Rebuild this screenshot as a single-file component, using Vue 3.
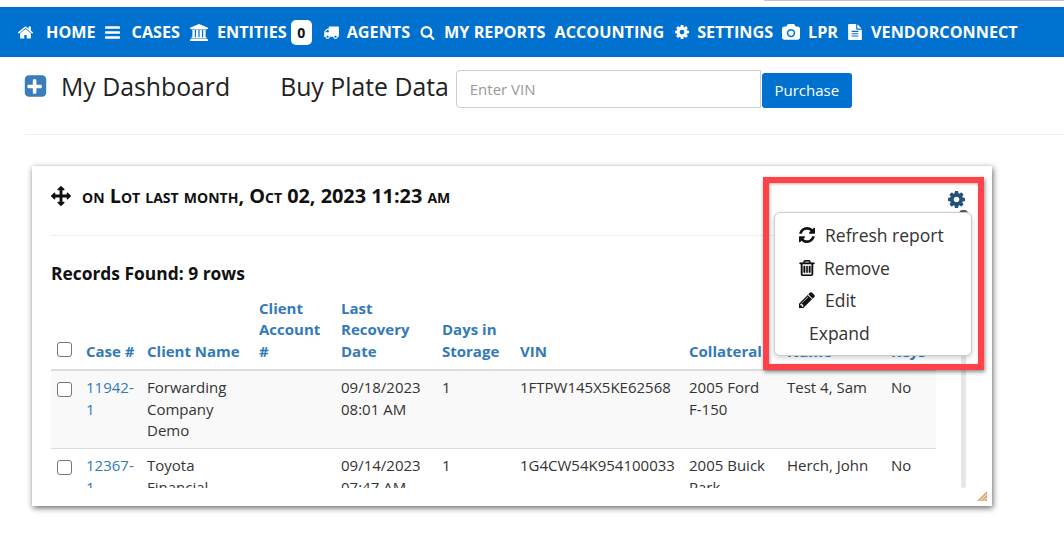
<script setup>
const P = {
  home: ['96 96 1600 1600', 'M1472 992v480q0 26-19 45t-45 19h-384v-384h-256v384h-384q-26 0-45-19t-19-45v-480q0-1 .5-3t.5-3l575-474 575 474q1 2 1 6zm223-69l-62 74q-8 9-21 11h-3q-13 0-21-7l-692-577-692 577q-12 8-24 7-13-2-21-11l-62-74q-8-10-7-23.500t11-21.500l719-599q32-26 76-26t76 26l244 204v-195q0-14 9-23t23-9h192q14 0 23 9t9 23v408l219 182q10 8 11 21.500t-7 23.500z'],
  bars: ['128 128 1536 1536', 'M1664 1344v128q0 26-19 45t-45 19h-1408q-26 0-45-19t-19-45v-128q0-26 19-45t45-19h1408q26 0 45 19t19 45zm0-512v128q0 26-19 45t-45 19h-1408q-26 0-45-19t-19-45v-128q0-26 19-45t45-19h1408q26 0 45 19t19 45zm0-512v128q0 26-19 45t-45 19h-1408q-26 0-45-19t-19-45v-128q0-26 19-45t45-19h1408q26 0 45 19t19 45z'],
  bank: ['0 0 1920 1792', 'M960 0l960 384v128h-128q0 26-20.500 45t-48.500 19h-1526q-28 0-48.500-19t-20.500-45h-128v-128zm-704 640h256v768h128v-768h256v768h128v-768h256v768h128v-768h256v768h59q28 0 48.500 19t20.500 45v64h-1664v-64q0-26 20.500-45t48.500-19h59v-768zm1595 960q28 0 48.500 19t20.500 45v128h-1920v-128q0-26 20.500-45t48.500-19h1782z'],
  truck: ['0 192 1792 1472', 'M640 1408q0-52-38-90t-90-38-90 38-38 90 38 90 90 38 90-38 38-90zm-384-512h384v-256h-158q-13 0-22 9l-195 195q-9 9-9 22v30zm1280 512q0-52-38-90t-90-38-90 38-38 90 38 90 90 38 90-38 38-90zm256-1088v1024q0 15-4 26.500t-13.500 18.500-16.500 11.500-23.500 6-22.500 2-25.500 0-22.500-.5q0 106-75 181t-181 75-181-75-75-181h-384q0 106-75 181t-181 75-181-75-75-181h-64q-3 0-22.500.5t-25.500 0-22.500-2-23.500-6-16.500-11.500-13.500-18.500-4-26.500q0-26 19-45t45-19v-320q0-8-.5-35t0-38 2.500-34.500 6.500-37 14-30.500 22.500-30l198-198q19-19 50.500-32t58.500-13h160v-192q0-26 19-45t45-19h1024q26 0 45 19t19 45z'],
  search: ['0 0 1792 1792', 'M1216 832q0-185-131.500-316.500t-316.500-131.500-316.500 131.500-131.500 316.500 131.500 316.500 316.500 131.500 316.500-131.500 131.500-316.500zm512 832q0 52-38 90t-90 38q-54 0-90-38l-343-342q-179 124-399 124-143 0-273.500-55.500t-225-150-150-225-55.500-273.500 55.500-273.500 150-225 225-150 273.500-55.500 273.500 55.500 225 150 150 225 55.500 273.500q0 220-124 399l343 343q37 37 37 90z'],
  cog: ['128 128 1536 1536', 'M1152 896q0-106-75-181t-181-75-181 75-75 181 75 181 181 75 181-75 75-181zm512-109v222q0 12-8 23t-19 13l-185 28q-19 54-39 91 35 50 107 138 10 12 10 25t-9 23q-27 37-99 108t-94 71q-12 0-26-9l-138-108q-44 23-91 38-16 136-29 186-7 28-36 28h-222q-14 0-24.500-8.500t-11.500-21.500l-28-184q-49-16-90-37l-141 107q-10 9-25 9-14 0-25-11-126-114-165-168-7-10-7-23 0-12 8-23 15-21 51-66.500t54-70.500q-27-50-41-99l-183-27q-13-2-21-12.500t-8-23.500v-222q0-12 8-23t19-13l186-28q14-46 39-92-40-57-107-138-10-12-10-24 0-10 9-23 26-36 98.500-107.500t94.500-71.500q13 0 26 10l138 107q44-23 91-38 16-136 29-186 7-28 36-28h222q14 0 24.500 8.500t11.500 21.500l28 184q49 16 90 37l142-107q9-9 24-9 13 0 25 10 129 119 165 170 7 8 7 22 0 12-8 23-15 21-51 66.500t-54 70.500q26 50 41 98l183 28q13 2 21 12.500t8 23.500z'],
  camera: ['0 0 1920 1792', 'M960 672q119 0 203.500 84.500t84.500 203.500-84.500 203.500-203.500 84.500-203.500-84.500-84.500-203.500 84.500-203.500 203.500-84.500zm704-416q106 0 181 75t75 181v896q0 106-75 181t-181 75h-1408q-106 0-181-75t-75-181v-896q0-106 75-181t181-75h224l51-136q19-49 69.500-84.500t103.500-35.500h512q53 0 103.500 35.500t69.500 84.500l51 136h224zm-704 1152q185 0 316.500-131.500t131.500-316.500-131.500-316.500-316.500-131.500-316.500 131.500-131.500 316.500 131.500 316.500 316.500 131.500z'],
  file: ['128 0 1536 1792', 'M1596 476q14 14 28 36h-472v-472q22 14 36 28zm-476 164h544v1056q0 40-28 68t-68 28h-1344q-40 0-68-28t-28-68v-1600q0-40 28-68t68-28h800v544q0 40 28 68t68 28zm160 736v-64q0-14-9-23t-23-9h-704q-14 0-23 9t-9 23v64q0 14 9 23t23 9h704q14 0 23-9t9-23zm0-256v-64q0-14-9-23t-23-9h-704q-14 0-23 9t-9 23v64q0 14 9 23t23 9h704q14 0 23-9t9-23zm0-256v-64q0-14-9-23t-23-9h-704q-14 0-23 9t-9 23v64q0 14 9 23t23 9h704q14 0 23-9t9-23z'],
  refresh: ['128 128 1536 1536', 'M1639 1056q0 5-1 7-64 268-268 434.500t-478 166.500q-146 0-282.500-55t-243.500-157l-129 129q-19 19-45 19t-45-19-19-45v-448q0-26 19-45t45-19h448q26 0 45 19t19 45-19 45l-137 137q71 66 161 102t187 36q134 0 250-65t186-179q11-17 53-117 8-23 30-23h192q13 0 22.500 9.500t9.500 22.500zm25-800v448q0 26-19 45t-45 19h-448q-26 0-45-19t-19-45 19-45l138-138q-148-137-349-137-134 0-250 65t-186 179q-11 17-53 117-8 23-30 23h-199q-13 0-22.500-9.500t-9.500-22.500v-7q65-268 270-434.500t480-166.500q146 0 284 55.500t245 156.500l130-129q19-19 45-19t45 19 19 45z'],
  trash: ['128 128 1536 1536', 'M704 736v576q0 14-9 23t-23 9h-64q-14 0-23-9t-9-23v-576q0-14 9-23t23-9h64q14 0 23 9t9 23zm256 0v576q0 14-9 23t-23 9h-64q-14 0-23-9t-9-23v-576q0-14 9-23t23-9h64q14 0 23 9t9 23zm256 0v576q0 14-9 23t-23 9h-64q-14 0-23-9t-9-23v-576q0-14 9-23t23-9h64q14 0 23 9t9 23zm128 724v-948h-896v948q0 22 7 40.500t14.500 27 10.500 8.500h832q3 0 10.500-8.500t14.500-27 7-40.500zm-672-1076h448l-48-117q-7-9-17-11h-317q-10 2-17 11zm928 32v64q0 14-9 23t-23 9h-96v948q0 83-47 143.500t-113 60.500h-832q-66 0-113-58.500t-47-141.500v-952h-96q-14 0-23-9t-9-23v-64q0-14 9-23t23-9h309l70-167q15-37 54-63t79-26h320q40 0 79 26t54 63l70 167h309q14 0 23 9t9 23z'],
  pencil: ['128 128 1536 1536', 'M491 1536l91-91-235-235-91 91v107h128v128h107zm523-928q0-22-22-22-10 0-17 7l-542 542q-7 7-7 17 0 22 22 22 10 0 17-7l542-542q7-7 7-17zm-54-192l416 416-832 832h-416v-416zm683 96q0 53-37 90l-166 166-416-416 166-165q36-38 90-38 53 0 91 38l235 234q37 39 37 91z'],
  arrows: ['0 0 1792 1792', 'M1792 896q0 26-19 45l-256 256q-19 19-45 19t-45-19-19-45v-128h-384v384h128q26 0 45 19t19 45-19 45l-256 256q-19 19-45 19t-45-19l-256-256q-19-19-19-45t19-45 45-19h128v-384h-384v128q0 26-19 45t-45 19-45-19l-256-256q-19-19-19-45t19-45l256-256q19-19 45-19t45 19 19 45v128h384v-384h-128q-26 0-45-19t-19-45 19-45l256-256q19-19 45-19t45 19l256 256q19 19 19 45t-19 45-45 19h-128v384h384v-128q0-26 19-45t45-19 45 19l256 256q19 19 19 45z'],
  plus: ['0 0 1792 1792', 'M1344 960v-128q0-26-19-45t-45-19h-320v-320q0-26-19-45t-45-19h-128q-26 0-45 19t-19 45v320h-320q-26 0-45 19t-19 45v128q0 26 19 45t45 19h320v320q0 26 19 45t45 19h128q26 0 45-19t19-45v-320h320q26 0 45-19t19-45zm320-576v960q0 119-84.500 203.500t-203.500 84.500h-960q-119 0-203.500-84.500t-84.500-203.500v-960q0-119 84.500-203.500t203.500-84.500h960q119 0 203.500 84.500t84.500 203.500z']
}

const nav = [
  { icon: 'home', w: 15, h: 15, gap: 13, left: 0, text: 'HOME' },
  { icon: 'bars', w: 15, h: 15, gap: 12, left: 9, text: 'CASES' },
  { icon: 'bank', w: 18, h: 17, gap: 9, left: 10, text: 'ENTITIES', badge: '0' },
  { icon: 'truck', w: 16, h: 13, gap: 8, left: 11, text: 'AGENTS' },
  { icon: 'search', w: 15, h: 15, gap: 9, left: 10, text: 'MY REPORTS' },
  { text: 'ACCOUNTING', left: 9 },
  { icon: 'cog', w: 14, h: 14, gap: 8, left: 11, text: 'SETTINGS' },
  { icon: 'camera', w: 18, h: 17, gap: 8, left: 9, text: 'LPR' },
  { icon: 'file', w: 14, h: 16, gap: 9, left: 10, text: 'VENDORCONNECT' }
]

const rows = [
  { id: '11942-1', client: 'Forwarding Company Demo', account: '', date: '09/18/2023 08:01 AM', days: '1', vin: '1FTPW145X5KE62568', coll: '2005 Ford F-150', name: 'Test 4, Sam', keys: 'No' },
  { id: '12367-1', client: 'Toyota Financial', account: '', date: '09/14/2023 07:47 AM', days: '1', vin: '1G4CW54K954100033', coll: '2005 Buick Park', name: 'Herch, John', keys: 'No' }
]

const menu = [
  { icon: 'refresh', text: 'Refresh report', cls: 'm-refresh' },
  { icon: 'trash', text: 'Remove', cls: 'm-trash' },
  { icon: 'pencil', text: 'Edit', cls: 'm-edit' },
  { text: 'Expand', cls: 'm-expand' }
]
</script>

<template>
  <div class="page">
    <div class="topstrip"><span class="topline"></span></div>
    <nav class="nav">
      <a v-for="n in nav" :key="n.text" class="nav-item" :style="{ marginLeft: n.left + 'px' }">
        <svg v-if="n.icon" :viewBox="P[n.icon][0]" :width="n.w" :height="n.h" :style="{ marginRight: n.gap + 'px' }" fill="#fff"><path :d="P[n.icon][1]" /></svg>
        <span>{{ n.text }}</span>
        <b v-if="n.badge" class="badge">{{ n.badge }}</b>
      </a>
    </nav>

    <header class="head">
      <svg class="plus" :viewBox="P.plus[0]" width="25" height="25" fill="#3a7dbb"><path :d="P.plus[1]" /></svg>
      <h1 class="title">My Dashboard</h1>
      <h1 class="title buy">Buy Plate Data</h1>
      <input class="vin" placeholder="Enter VIN" />
      <button class="buy-btn">Purchase</button>
    </header>
    <hr class="rule" />

    <section class="card">
      <div class="card-head">
        <svg class="move" :viewBox="P.arrows[0]" width="20" height="20" fill="#111"><path :d="P.arrows[1]" /></svg>
        <h2 class="card-title">on Lot last month, Oct 02, 2023 11:23 am</h2>
        <svg class="gear" :viewBox="P.cog[0]" width="17" height="17" fill="#23527c"><path :d="P.cog[1]" /></svg>
      </div>
      <hr class="card-rule" />
      <div class="records">Records Found: 9 rows</div>
      <div class="clip">
        <table class="grid">
          <colgroup>
            <col class="c0" /><col class="c1" /><col class="c2" /><col class="c3" /><col class="c4" />
            <col class="c5" /><col class="c6" /><col class="c7" /><col class="c8" /><col class="c9" />
          </colgroup>
          <thead>
            <tr>
              <th><input type="checkbox" class="cb cb-head" /></th>
              <th>Case #</th>
              <th>Client Name</th>
              <th>Client Account #</th>
              <th>Last Recovery Date</th>
              <th>Days in Storage</th>
              <th>VIN</th>
              <th>Collateral</th>
              <th>Name</th>
              <th>Keys</th>
            </tr>
          </thead>
          <tbody>
            <tr v-for="r in rows" :key="r.id">
              <td><input type="checkbox" class="cb" /></td>
              <td class="link">{{ r.id }}</td>
              <td>{{ r.client }}</td>
              <td>{{ r.account }}</td>
              <td>{{ r.date }}</td>
              <td>{{ r.days }}</td>
              <td>{{ r.vin }}</td>
              <td>{{ r.coll }}</td>
              <td>{{ r.name }}</td>
              <td>{{ r.keys }}</td>
            </tr>
          </tbody>
        </table>
      </div>

      <div class="scrollbar"><span class="thumb"></span></div>
      <svg class="resize" viewBox="0 0 10 10" width="10" height="10">
        <path d="M10 0v10H0z" fill="#dba878" />
        <path d="M10 3L3 10M10 6.500L6.500 10" stroke="#fff" stroke-width=".8" />
      </svg>

      <div class="dropdown">
        <div v-for="m in menu" :key="m.text" class="menu-item" :class="m.cls">
          <svg v-if="m.icon" :viewBox="P[m.icon][0]" width="16" height="16" fill="#111"><path :d="P[m.icon][1]" /></svg>
          <span>{{ m.text }}</span>
        </div>
      </div>
      <div class="annot"></div>
    </section>
  </div>
</template>

<style>
html, body { margin: 0; background: #fff; }
</style>

<style scoped>
.page {
  width: 1064px;
  height: 542px;
  overflow: hidden;
  font-family: "Open Sans", sans-serif;
  color: #222;
}
.topstrip { height: 7px; display: flex; justify-content: flex-end; }
.topline { width: 300px; height: 1px; background: #c4c4c4; }

.nav {
  height: 50px;
  background: #0071ce;
  display: flex;
  align-items: center;
  padding-left: 18px;
  box-sizing: border-box;
}
.nav-item {
  display: flex;
  align-items: center;
  color: #fff;
  font-size: 16.2px;
  font-weight: 700;
  white-space: nowrap;
}
.badge {
  margin-left: 4px;
  width: 21px;
  height: 25px;
  border-radius: 5px;
  background: #fff;
  color: #111;
  font-size: 14px;
  font-weight: 700;
  display: flex;
  align-items: center;
  justify-content: center;
}

.head {
  height: 77px;
  display: flex;
  align-items: flex-start;
  padding-left: 25px;
  box-sizing: border-box;
}
.plus { margin: 17px 13px 0 -2px; }
.title {
  margin: 12px 0 0;
  font-size: 24.8px;
  line-height: 34px;
  font-weight: 400;
  color: #222;
  white-space: nowrap;
}
.buy { margin-left: 50px; }
.vin {
  margin: 13px 0 0 7px;
  width: 305px;
  height: 38px;
  box-sizing: border-box;
  border: 1px solid #ccc;
  border-radius: 4px 0 0 4px;
  padding: 0 13px;
  font: 400 15px "Open Sans", sans-serif;
  outline: none;
}
.vin::placeholder { color: #999; }
.buy-btn {
  margin: 16px 0 0 1px;
  width: 90px;
  height: 35px;
  padding: 0 0 2px;
  border: 0;
  border-radius: 3px;
  background: #0071ce;
  color: #fff;
  font: 400 15px "Open Sans", sans-serif;
}
.rule {
  margin: 0 0 0 25px;
  border: 0;
  border-top: 1px solid #eee;
}

.card {
  position: relative;
  margin: 31px 0 0 32px;
  width: 960px;
  height: 340px;
  box-sizing: border-box;
  padding: 0 19px;
  background: #fff;
  box-shadow: 1px 2px 6px rgba(0, 0, 0, 0.6);
}
.card-head {
  height: 69px;
  box-sizing: border-box;
  padding-bottom: 11px;
  display: flex;
  align-items: center;
  gap: 11px;
}
.move { margin-top: 2px; }
.card-title {
  margin: 0;
  font-size: 19.85px;
  font-weight: 700;
  font-variant: small-caps;
  color: #111;
  white-space: nowrap;
}
.gear { margin-left: auto; margin-top: 9px; margin-right: 8px; }
.card-rule {
  margin: 0 13px 0 0;
  border: 0;
  border-top: 1px solid #eee;
}
.records {
  margin-top: 26px;
  font-size: 17.4px;
  line-height: 22px;
  font-weight: 700;
  color: #111;
}
.clip {
  margin-top: 14px;
  width: 885px;
  height: 190px;
  overflow: hidden;
}
.grid {
  width: 885px;
  table-layout: fixed;
  border-collapse: collapse;
  font-size: 15px;
  line-height: 21.4px;
}
.c0 { width: 29px; }
.c1 { width: 61px; }
.c2 { width: 112px; }
.c3 { width: 82px; }
.c4 { width: 101px; }
.c5 { width: 78px; }
.c6 { width: 169px; }
.c7 { width: 98px; }
.c8 { width: 104px; }
.c9 { width: 51px; }
th {
  text-align: left;
  vertical-align: bottom;
  padding: 0 6px 7px;
  color: #337ab7;
  font-weight: 700;
  border-bottom: 2px solid #ddd;
}
td {
  vertical-align: top;
  padding: 6px;
  border-bottom: 1px solid #ddd;
  color: #333;
}
tbody tr:first-child td { background: #f9f9f9; padding-bottom: 7px; }
.link { color: #337ab7; }
.cb {
  appearance: none;
  display: block;
  margin: 5px 0 0 0;
  width: 15px;
  height: 15px;
  box-sizing: border-box;
  border: 1px solid #767676;
  border-radius: 3px;
  background: #fff;
}
.cb-head { margin: 0 0 5px; }
.scrollbar {
  position: absolute;
  left: 929px;
  top: 44px;
  bottom: 18px;
  width: 5px;
  background: #e6e6e6;
  border-radius: 3px;
}
.thumb {
  display: block;
  width: 9px;
  height: 6px;
  margin-left: -2px;
  border-radius: 4px 4px 0 0;
  background: #555;
}
.resize { position: absolute; right: 5px; bottom: 5px; }

.dropdown {
  position: absolute;
  left: 742px;
  top: 46px;
  width: 198px;
  height: 144px;
  box-sizing: border-box;
  background: #fff;
  border: 1px solid #ccc;
  border-radius: 6px;
  box-shadow: 0 2px 5px rgba(0, 0, 0, 0.18);
  padding-top: 6px;
}
.menu-item {
  height: 32.6px;
  display: flex;
  align-items: center;
  padding-left: 24px;
  font-size: 17.5px;
  color: #333;
  white-space: nowrap;
}
.m-refresh svg { margin-right: 10px; }
.m-trash svg { margin-right: 9px; stroke: #111; stroke-width: 50; }
.m-edit svg { margin-right: 10px; }
.m-expand { padding-left: 34px; }

.annot {
  position: absolute;
  left: 731px;
  top: 11px;
  width: 221px;
  height: 193px;
  box-sizing: border-box;
  border: 6px solid #ff4248;
  box-shadow: 1px 2px 4px rgba(0, 0, 0, 0.45), inset 1px 1px 3px rgba(0, 0, 0, 0.3);
  pointer-events: none;
}
</style>
